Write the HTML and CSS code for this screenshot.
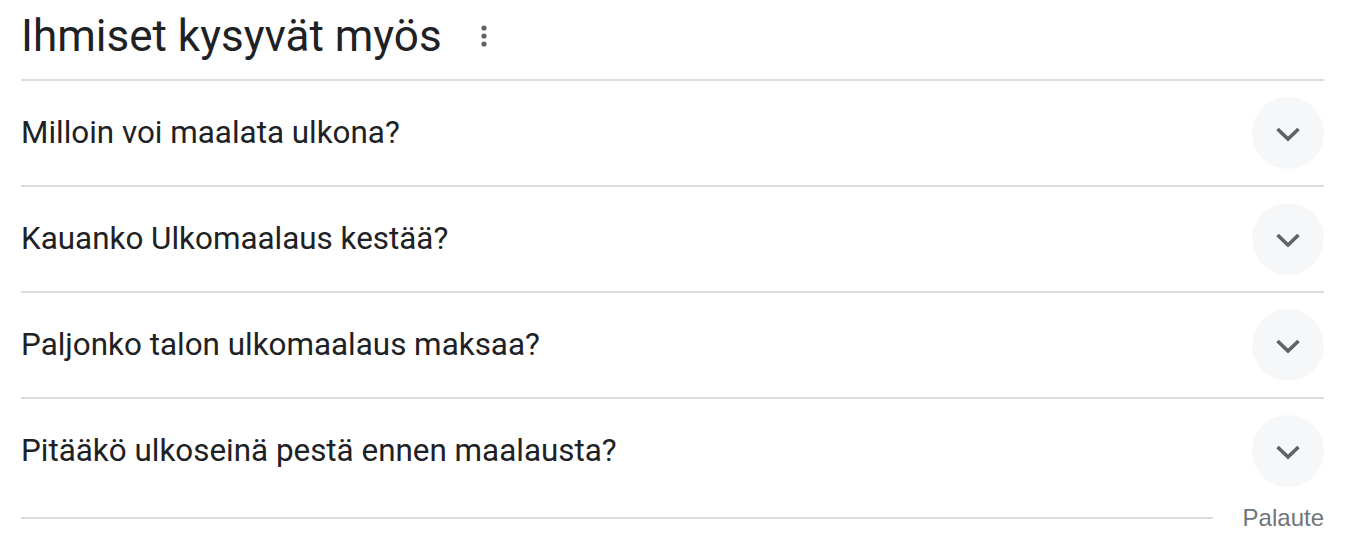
FILE: index.html
```html
<!DOCTYPE html>
<html lang="fi">
<head>
<meta charset="utf-8">
<link rel="stylesheet" href="styles.css">
</head>
<body>
<div class="paa">
  <div class="head">
    <h2 class="title">Ihmiset kysyvät myös</h2>
    <span class="more" aria-label="Lisää">
      <svg width="8" height="24" viewBox="0 0 8 24"><circle cx="4" cy="4" r="2.6" fill="#5f6368"/><circle cx="4" cy="12" r="2.6" fill="#5f6368"/><circle cx="4" cy="20" r="2.6" fill="#5f6368"/></svg>
    </span>
  </div>
  <div class="q">
    <span class="qt">Milloin voi maalata ulkona?</span>
    <span class="chev"><svg width="26" height="16" viewBox="0 0 26 16"><path d="M2.5 3 L13 13 L23.5 3" fill="none" stroke="#5f6368" stroke-width="3.6"/></svg></span>
  </div>
  <div class="q">
    <span class="qt">Kauanko Ulkomaalaus kestää?</span>
    <span class="chev"><svg width="26" height="16" viewBox="0 0 26 16"><path d="M2.5 3 L13 13 L23.5 3" fill="none" stroke="#5f6368" stroke-width="3.6"/></svg></span>
  </div>
  <div class="q">
    <span class="qt">Paljonko talon ulkomaalaus maksaa?</span>
    <span class="chev"><svg width="26" height="16" viewBox="0 0 26 16"><path d="M2.5 3 L13 13 L23.5 3" fill="none" stroke="#5f6368" stroke-width="3.6"/></svg></span>
  </div>
  <div class="q">
    <span class="qt">Pitääkö ulkoseinä pestä ennen maalausta?</span>
    <span class="chev"><svg width="26" height="16" viewBox="0 0 26 16"><path d="M2.5 3 L13 13 L23.5 3" fill="none" stroke="#5f6368" stroke-width="3.6"/></svg></span>
  </div>
  <div class="foot">
    <span class="line"></span>
    <span class="fb">Palaute</span>
  </div>
</div>
</body>
</html>
```
FILE: styles.css
```css
html, body {
  margin: 0;
  padding: 0;
  background: #fff;
}
.paa {
  margin-left: 21px;
  width: 1303px;
  font-family: Roboto, "Liberation Sans", Arial, sans-serif;
  color: #202124;
}
.head {
  height: 79px;
  display: flex;
  align-items: center;
  gap: 38px;
}
.title {
  margin: 0;
  font-size: 44px;
  font-weight: 400;
  line-height: 1;
  color: #202124;
  padding-bottom: 8px;
}
.more {
  display: flex;
  padding-bottom: 8px;
}
.q {
  height: 106px;
  border-top: 2px solid #dadce0;
  box-sizing: border-box;
  display: flex;
  align-items: center;
  justify-content: space-between;
}
.qt {
  font-size: 31.4px;
  line-height: 40px;
}
.chev {
  width: 72px;
  height: 72px;
  border-radius: 50%;
  background: #f6f7f8;
  display: flex;
  align-items: center;
  justify-content: center;
}
.chev svg { margin-top: 2px; }
.foot {
  height: 30px;
  display: flex;
  align-items: center;
  gap: 30px;
}
.line {
  flex: 1;
  height: 2px;
  background: #dadce0;
}
.fb {
  font-family: Arial, "Liberation Sans", sans-serif;
  font-size: 24px;
  color: #70757a;
}
```
